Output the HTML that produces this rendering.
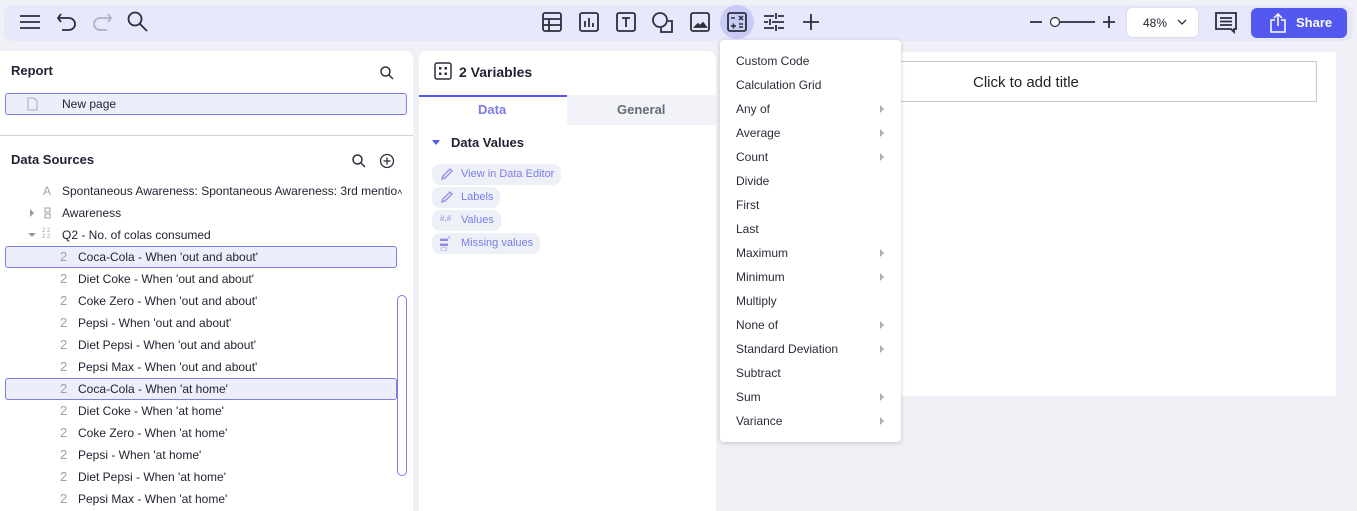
<!DOCTYPE html>
<html><head><style>
*{box-sizing:border-box;margin:0;padding:0}
body{width:1357px;height:511px;overflow:hidden;background:#eff1f6;font-family:"Liberation Sans",sans-serif;font-size:12px;color:#1f2230;position:relative}
.a{position:absolute}
svg{position:absolute;fill:none;stroke:#2b2f3a;stroke-width:1.8}
.tb{left:4px;top:5px;width:1349px;height:36px;background:#e7e8fb;border-radius:8px}
.panel{background:#fff}
.row{position:absolute;left:5px;width:392px;height:22px;font-size:12px;line-height:22px}
.row .n{position:absolute;left:55px;color:#9aa0ac;font-size:13px}
.row .t{position:absolute;left:73px}
.sel{box-shadow:inset 0 0 0 1px #7b7fe6;background:#eceefc;border-radius:3px}
.mi{position:absolute;left:16px;font-size:12px;color:#2a2d38}
.ar{position:absolute;left:160px;width:0;height:0;border-left:4px solid #a8adb8;border-top:4px solid transparent;border-bottom:4px solid transparent}
.chip{position:absolute;left:432px;height:21px;background:#eef0f8;border-radius:8px;color:#7b7be8;font-size:11px;line-height:21px;padding-left:29px;padding-right:7px}
</style></head><body>
<div class="a tb"></div>
<svg style="left:19px;top:13px" width="22" height="18"><path d="M1 3h20M1 9h20M1 15h20"/></svg>
<svg style="left:56px;top:12px" width="22" height="20"><path d="M5 2L2 6l3 4M2 6h11a6 6 0 010 12H6"/></svg>
<svg style="left:91px;top:12px;stroke:#b0b4bf" width="22" height="20"><path d="M17 2l3 4-3 4M20 6H9a6 6 0 000 12h7"/></svg>
<svg style="left:127px;top:11px" width="22" height="22"><circle cx="8" cy="8" r="6.5"/><path d="M13 13l7 7"/></svg>
<svg style="left:542px;top:12px" width="20" height="20"><rect x="1" y="1" width="18" height="18" rx="2"/><path d="M1 7h18M1 13h18M7 7v12"/></svg>
<svg style="left:579px;top:12px" width="20" height="20"><rect x="1" y="1" width="18" height="18" rx="2"/><path d="M6 9v6M10 6v9M14 11v4"/></svg>
<svg style="left:616px;top:12px" width="20" height="20"><rect x="1" y="1" width="18" height="18" rx="2"/><path d="M6 6h8M10 6v9"/></svg>
<svg style="left:651px;top:11px" width="24" height="24"><circle cx="9" cy="9" r="7"/><path d="M17 10h4v11H10v-4"/></svg>
<svg style="left:690px;top:12px" width="20" height="20"><rect x="1" y="1" width="18" height="18" rx="2"/><path d="M5 15l3-3 2 2 3-3 3 4z" fill="#2b2f3a"/></svg>
<div class="a" style="left:720px;top:5px;width:34px;height:34px;border-radius:17px;background:#c9cbf6"></div>
<svg style="left:727px;top:12px" width="20" height="20"><rect x="1" y="1" width="18" height="18" rx="2"/><path d="M4 6h4M12 4l4 4M16 4l-4 4M4 14h5M6.5 11.5v5M12 12h4M12 15h4" stroke-width="1.5"/></svg>
<svg style="left:763px;top:12px" width="22" height="20"><path d="M1 4h10M15 4h6M13 1v6M1 10h4M9 10h12M7 7v6M1 16h10M15 16h6M13 13v6"/></svg>
<svg style="left:801px;top:12px" width="20" height="20"><path d="M10 2v16M2 10h16"/></svg>
<svg style="left:1029px;top:15px" width="14" height="14"><path d="M1 7h12"/></svg>
<svg style="left:1048px;top:15px" width="48" height="14"><circle cx="7" cy="7" r="4.5" fill="#fff" stroke-width="1.2"/><path d="M12 7h35"/></svg>
<svg style="left:1102px;top:15px" width="14" height="14"><path d="M1 7h12M7 1v12"/></svg>
<div class="a" style="left:1126px;top:7px;width:73px;height:31px;background:#fff;border:1px solid #dcdee8;border-radius:6px"></div>
<div class="a" style="left:1143px;top:16px;font-size:12px">48%</div>
<svg style="left:1177px;top:19px;stroke-width:1.3" width="10" height="8"><path d="M1 1l4 4 4-4"/></svg>
<svg style="left:1214px;top:11px" width="26" height="24"><path d="M2 2h20v16h-2v3l-3-3H2z"/><path d="M6 7h12M6 10.5h12M6 14h12"/></svg>
<div class="a" style="left:1251px;top:8px;width:96px;height:30px;background:#5258f0;border-radius:6px"></div>
<svg style="left:1269px;top:13px;stroke:#fff;stroke-width:1.5" width="18" height="20"><path d="M6 7H2v12h14V7h-4M9 13V2M5 5l4-4 4 4"/></svg>
<div class="a" style="left:1296px;top:15px;color:#fff;font-weight:bold;font-size:13px">Share</div>

<div class="a panel" style="left:0;top:51px;width:413px;height:460px;border-radius:0 8px 0 0"></div>
<div class="a" style="left:11px;top:63px;font-weight:bold;font-size:13px">Report</div>
<svg style="left:380px;top:66px;stroke-width:1.5" width="14" height="14"><circle cx="5.5" cy="5.5" r="4.5"/><path d="M9 9l4 4"/></svg>
<div class="row sel" style="top:93px;width:402px"></div>
<svg style="left:27px;top:97px;stroke:#aab;stroke-width:1" width="11" height="14"><path d="M1 1h6l3 3v9H1z"/></svg>
<div class="a" style="left:62px;top:97px">New page</div>
<div class="a" style="left:0;top:135px;width:413px;height:1px;background:#d0d2da"></div>
<div class="a" style="left:11px;top:152px;font-weight:bold;font-size:13px">Data Sources</div>
<svg style="left:352px;top:154px;stroke-width:1.5" width="14" height="14"><circle cx="5.5" cy="5.5" r="4.5"/><path d="M9 9l4 4"/></svg>
<svg style="left:379px;top:153px;stroke-width:1.3" width="16" height="16"><circle cx="8" cy="8" r="6.5"/><path d="M8 4.5v7M4.5 8h7"/></svg>
<div class="a" style="left:43px;top:184px;color:#9aa0ac">A</div>
<div class="a" style="left:62px;top:184px;font-size:12px;white-space:nowrap">Spontaneous Awareness: Spontaneous Awareness: 3rd mentio<span style="font-size:9px">˄</span></div>
<div class="a" style="left:30px;top:209px;border-left:4px solid #999;border-top:4px solid transparent;border-bottom:4px solid transparent"></div>
<svg style="left:44px;top:207px;stroke:#9aa0ac;stroke-width:1" width="8" height="12"><rect x="1" y="1" width="5" height="4"/><rect x="1" y="7" width="5" height="4"/></svg>
<div class="a" style="left:62px;top:206px">Awareness</div>
<div class="a" style="left:28px;top:233px;border-top:4px solid #999;border-left:4px solid transparent;border-right:4px solid transparent"></div>
<div class="a" style="left:42px;top:228px;font-size:6px;color:#9aa0ac;line-height:6px">2 2<br>2 2</div>
<div class="a" style="left:62px;top:228px">Q2 - No. of colas consumed</div>
<div class="row sel" style="top:246px"><span class="n">2</span><span class="t">Coca-Cola - When 'out and about'</span></div>
<div class="row" style="top:268px"><span class="n">2</span><span class="t">Diet Coke - When 'out and about'</span></div>
<div class="row" style="top:290px"><span class="n">2</span><span class="t">Coke Zero - When 'out and about'</span></div>
<div class="row" style="top:312px"><span class="n">2</span><span class="t">Pepsi - When 'out and about'</span></div>
<div class="row" style="top:334px"><span class="n">2</span><span class="t">Diet Pepsi - When 'out and about'</span></div>
<div class="row" style="top:356px"><span class="n">2</span><span class="t">Pepsi Max - When 'out and about'</span></div>
<div class="row sel" style="top:378px"><span class="n">2</span><span class="t">Coca-Cola - When 'at home'</span></div>
<div class="row" style="top:400px"><span class="n">2</span><span class="t">Diet Coke - When 'at home'</span></div>
<div class="row" style="top:422px"><span class="n">2</span><span class="t">Coke Zero - When 'at home'</span></div>
<div class="row" style="top:444px"><span class="n">2</span><span class="t">Pepsi - When 'at home'</span></div>
<div class="row" style="top:466px"><span class="n">2</span><span class="t">Diet Pepsi - When 'at home'</span></div>
<div class="row" style="top:488px"><span class="n">2</span><span class="t">Pepsi Max - When 'at home'</span></div>
<div class="a" style="left:397px;top:295px;width:10px;height:181px;border:1px solid #7b7fe6;border-radius:5px"></div>

<div class="a panel" style="left:419px;top:51px;width:297px;height:460px;border-radius:8px 8px 0 0"></div>
<svg style="left:434px;top:62px;stroke-width:1.5" width="18" height="18"><rect x="1" y="1" width="16" height="16" rx="2"/><rect x="5" y="5" width="2.5" height="2.5" fill="#2b2f3a" stroke="none"/><rect x="10.5" y="5" width="2.5" height="2.5" fill="#2b2f3a" stroke="none"/><rect x="5" y="10.5" width="2.5" height="2.5" fill="#2b2f3a" stroke="none"/><rect x="10.5" y="10.5" width="2.5" height="2.5" fill="#2b2f3a" stroke="none"/></svg>
<div class="a" style="left:459px;top:64px;font-weight:bold;font-size:14px">2 Variables</div>
<div class="a" style="left:419px;top:95px;width:148px;height:2px;background:#5258f0"></div>
<div class="a" style="left:567px;top:95px;width:149px;height:30px;background:#f1f3f8"></div>
<div class="a" style="left:478px;top:102px;font-weight:bold;font-size:13px;color:#7b7be8">Data</div>
<div class="a" style="left:617px;top:102px;font-weight:bold;font-size:13px;color:#676b76">General</div>
<div class="a" style="left:432px;top:140px;border-top:5px solid #5258f0;border-left:4px solid transparent;border-right:4px solid transparent"></div>
<div class="a" style="left:451px;top:135px;font-weight:bold;font-size:13px">Data Values</div>
<div class="chip" style="top:164px">View in Data Editor</div>
<div class="chip" style="top:187px">Labels</div>
<div class="chip" style="top:210px">Values</div>
<div class="chip" style="top:233px">Missing values</div>
<svg style="left:441px;top:168px;stroke:#8d8de8;stroke-width:1.3" width="12" height="12"><path d="M1 11l1-3 7-7 2 2-7 7z"/></svg>
<svg style="left:441px;top:191px;stroke:#8d8de8;stroke-width:1.3" width="12" height="12"><path d="M1 11l1-3 7-7 2 2-7 7z"/></svg>
<div class="a" style="left:440px;top:214px;font-size:8px;color:#8d8de8">#,#</div>
<div class="a" style="left:440px;top:236px;font-size:8px;color:#8d8de8;line-height:5px">▬ˣ<br>▬<br>▭</div>

<div class="a" style="left:880px;top:52px;width:456px;height:344px;background:#fff"></div>
<div class="a" style="left:895px;top:61px;width:422px;height:41px;border:1px solid #c8c8c8"></div>
<div class="a" style="left:973px;top:74px;font-size:15px;color:#222">Click to add title</div>

<div class="a" style="left:720px;top:40px;width:181px;height:402px;background:#fff;border-radius:4px;box-shadow:0 1px 5px rgba(0,0,0,.2)">
<div class="mi" style="top:14px">Custom Code</div>
<div class="mi" style="top:38px">Calculation Grid</div>
<div class="mi" style="top:62px">Any of</div><div class="ar" style="top:65px"></div>
<div class="mi" style="top:86px">Average</div><div class="ar" style="top:89px"></div>
<div class="mi" style="top:110px">Count</div><div class="ar" style="top:113px"></div>
<div class="mi" style="top:134px">Divide</div>
<div class="mi" style="top:158px">First</div>
<div class="mi" style="top:182px">Last</div>
<div class="mi" style="top:206px">Maximum</div><div class="ar" style="top:209px"></div>
<div class="mi" style="top:230px">Minimum</div><div class="ar" style="top:233px"></div>
<div class="mi" style="top:254px">Multiply</div>
<div class="mi" style="top:278px">None of</div><div class="ar" style="top:281px"></div>
<div class="mi" style="top:302px">Standard Deviation</div><div class="ar" style="top:305px"></div>
<div class="mi" style="top:326px">Subtract</div>
<div class="mi" style="top:350px">Sum</div><div class="ar" style="top:353px"></div>
<div class="mi" style="top:374px">Variance</div><div class="ar" style="top:377px"></div>
</div>
</body></html>
